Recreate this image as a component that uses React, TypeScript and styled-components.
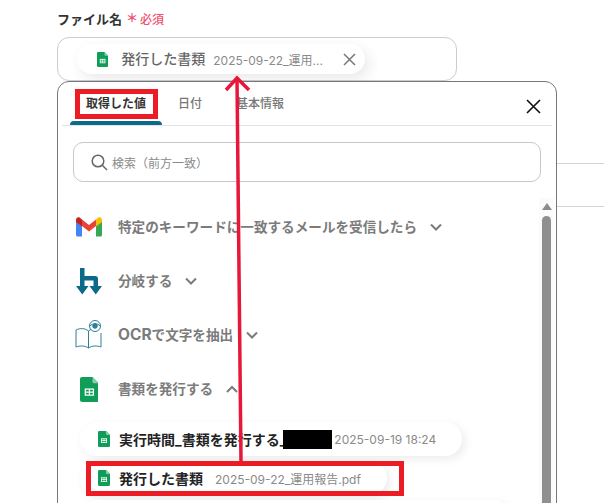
import React from "react";
import styled, { createGlobalStyle } from "styled-components";

const Global = createGlobalStyle`
  html, body { margin: 0; padding: 0; background: #fff; overflow: hidden; }
  body {
    width: 604px;
    height: 503px;
    font-family: Inter, "Noto Sans CJK JP", sans-serif;
  }
`;

const Page = styled.div`
  position: relative;
  width: 604px;
  height: 503px;
  overflow: hidden;
  padding: 8px 0 0 57px;
  box-sizing: border-box;
`;

const LabelRow = styled.div`
  display: flex;
  align-items: center;
  height: 20px;
  margin-bottom: 9px;
`;

const Label = styled.span`
  font-size: 13px;
  font-weight: 700;
  color: #333;
`;

const Star = styled.span`
  font-size: 12px;
  line-height: 20px;
  font-weight: 700;
  color: #f0506e;
  margin: 2px 2px 0 4px;
`;

const Required = styled.span`
  font-size: 12px;
  font-weight: 500;
  color: #f0506e;
`;

const FileBox = styled.div`
  width: 400px;
  height: 44px;
  box-sizing: border-box;
  border: 1px solid #c9ccd4;
  border-radius: 12px;
  display: flex;
  align-items: center;
  padding-left: 19px;
`;

const Pill = styled.div<{ $width: number }>`
  display: flex;
  align-items: center;
  width: ${(p) => p.$width}px;
  height: 30px;
  box-sizing: border-box;
  flex-shrink: 0;
  border-radius: 15px;
  background: #fff;
  box-shadow: 4px 5px 14px rgba(0, 0, 0, 0.09);
`;

const TopPill = styled(Pill)`
  padding-left: 20px;
`;

const PillName = styled.span<{ $dark?: boolean; $left: number }>`
  font-size: 14px;
  font-weight: ${(p) => (p.$dark ? 700 : 500)};
  color: ${(p) => (p.$dark ? "#222" : "#666")};
  margin-left: ${(p) => p.$left}px;
  padding-bottom: ${(p) => (p.$dark ? 0 : 2)}px;
  white-space: nowrap;
  display: flex;
  align-items: center;
`;

const PillValue = styled.span<{ $left: number }>`
  font-size: 12px;
  color: #8a8a8a;
  margin-left: ${(p) => p.$left}px;
  white-space: nowrap;
`;

const PillClose = styled.svg`
  margin-left: 20px;
  flex-shrink: 0;
`;

const Panel = styled.div`
  width: 500px;
  height: 450px;
  box-sizing: border-box;
  border: 1px solid #777;
  border-radius: 12px 12px 0 0;
  background: #fff;
  position: relative;
`;

const Tabs = styled.div`
  display: flex;
  align-items: flex-start;
  height: 43px;
  margin: 0 4px;
  padding-left: 8px;
  border-bottom: 1px solid #e3e3e3;
`;

const Tab = styled.div<{ $active?: boolean; $width: number }>`
  position: relative;
  width: ${(p) => p.$width}px;
  height: 43px;
  line-height: 44px;
  text-align: center;
  font-size: 12px;
  font-weight: ${(p) => (p.$active ? 700 : 500)};
  color: ${(p) => (p.$active ? "#333" : "#777")};
  flex-shrink: 0;

  &::after {
    content: "";
    display: ${(p) => (p.$active ? "block" : "none")};
    position: absolute;
    left: 0;
    right: 0;
    bottom: 0;
    height: 4px;
    background: #0b6a87;
    border-radius: 4px 4px 0 0;
  }
`;

const TabClose = styled.svg`
  margin-left: auto;
  margin-top: 17px;
  margin-right: 11px;
`;

const Search = styled.div`
  margin: 16px 0 0 15px;
  width: 468px;
  height: 40px;
  box-sizing: border-box;
  border: 1px solid #c8c8c8;
  border-radius: 10px;
  display: flex;
  align-items: center;
  padding-left: 17px;
  gap: 4px;
`;

const SearchText = styled.span`
  font-size: 12px;
  color: #8a8a8a;
`;

const List = styled.div`
  display: flex;
  flex-direction: column;
  margin: 18px 0 0 17px;
`;

const Step = styled.div`
  display: flex;
  align-items: center;
  height: 54px;
`;

const StepIcon = styled.div`
  width: 28px;
  height: 30px;
  display: flex;
  align-items: center;
  justify-content: center;
  margin-right: 15px;
  flex-shrink: 0;
`;

const StepTitle = styled.span`
  font-size: 13.6px;
  font-weight: 700;
  color: #7b7b7b;
  white-space: nowrap;
  padding-bottom: 2px;
`;

const Latin = styled.span`
  font-size: 15.5px;
`;

const Chevron = styled.svg`
  margin-left: 13px;
`;

const Values = styled.div`
  display: flex;
  flex-direction: column;
  gap: 5px;
  margin: 6px 0 0 5px;
`;

const ValuePill = styled(Pill)`
  height: 34px;
  border-radius: 17px;
  padding-left: 18px;
  box-shadow: 3px 3px 10px rgba(0, 0, 0, 0.08);
`;

const Redacted = styled.span`
  display: inline-block;
  width: 49px;
  height: 19px;
  margin-left: -3px;
  background: #000;
`;

const Scrollbar = styled.div`
  position: absolute;
  right: 2px;
  top: 116px;
  width: 15px;
  height: 332px;
  background: #fbfbfb;
  display: flex;
  flex-direction: column;
  align-items: center;
  padding-top: 5px;
  box-sizing: border-box;
`;

const ScrollArrow = styled.div`
  width: 0;
  height: 0;
  border-left: 5px solid transparent;
  border-right: 5px solid transparent;
  border-bottom: 7px solid #8c8c8c;
`;

const ScrollThumb = styled.div`
  width: 9px;
  flex: 1;
  margin-top: 6px;
  background: #8f8f8f;
  border-radius: 5px 5px 0 0;
`;

const SideLine = styled.div<{ $top: number }>`
  position: absolute;
  left: 557px;
  right: 0;
  top: ${(p) => p.$top}px;
  height: 1px;
  background: #d4d4d4;
`;

const Callout = styled.div<{ $x: number; $y: number; $w: number; $h: number }>`
  position: absolute;
  left: ${(p) => p.$x}px;
  top: ${(p) => p.$y}px;
  width: ${(p) => p.$w}px;
  height: ${(p) => p.$h}px;
  box-sizing: border-box;
  border: 5px solid #ed1c24;
`;

const ArrowLayer = styled.svg`
  position: absolute;
  left: 0;
  top: 0;
  pointer-events: none;
`;

const SheetIcon = ({ size = 15 }: { size?: number }) => (
  <svg width={size * 0.75} height={size} viewBox="0 0 18 24">
    <path d="M2 0h10l6 6v16a2 2 0 0 1-2 2H2a2 2 0 0 1-2-2V2a2 2 0 0 1 2-2z" fill="#0f9d58" />
    <path d="M12 0l6 6h-4.500A1.500 1.500 0 0 1 12 4.500z" fill="#87ceac" />
    <path d="M4.500 11h9v7h-9z" fill="#fff" />
    <path d="M5.700 12.200h2.800v1.700H5.700zM9.500 12.200h2.800v1.700H9.500zM5.700 15h2.800v1.800H5.700zM9.500 15h2.800v1.800H9.500z" fill="#0f9d58" />
  </svg>
);

const GmailIcon = () => (
  <svg width="26" height="20" viewBox="0 0 26 20">
    <path d="M0 4.500V18a1.600 1.600 0 0 0 1.600 1.600H6V9z" fill="#4285f4" />
    <path d="M20 19.600h4.400A1.600 1.600 0 0 0 26 18V4.500L20 9z" fill="#34a853" />
    <path d="M6 9V2.400L13 8l7-5.600V9l-7 5.500z" fill="#ea4335" />
    <path d="M0 3v2l6 4.500V2.400L3.600.6C2-.6 0 .6 0 3z" fill="#c5221f" />
    <path d="M20 2.400V9.500l6-4.500V3c0-2.400-2-3.600-3.600-2.400z" fill="#fbbc04" />
  </svg>
);

const BranchIcon = () => (
  <svg width="26" height="27" viewBox="0 0 26 27">
    <path d="M4 0h4.500v8H19a3 3 0 0 1 3 3v7h-4.500v-5.500H8.500V18H4z" fill="#0b6a87" />
    <path d="M0 18h12.500l-6.250 8.500zM13.500 18H26l-6.250 8.500z" fill="#0b6a87" />
  </svg>
);

const OcrIcon = () => (
  <svg width="28" height="30" viewBox="0 0 28 30" fill="none" stroke="#2f7f96" strokeWidth="1">
    <path d="M1 10c4-2 9-2 12.500 1v17C10 25.500 5 25.500 1 27z" />
    <path d="M13.500 11c1-.8 2-1.400 3-1.800M26 13v14c-4-1.500-9-1.500-12.500 1" />
    <circle cx="20" cy="6" r="5.500" fill="#fff" />
    <circle cx="20" cy="6" r="2.300" fill="#2f7f96" />
    <path d="M15 6c2-3 8-3 10 0" />
  </svg>
);

const ChevronIcon = ({ up }: { up?: boolean }) => (
  <Chevron width="12" height="8" viewBox="0 0 12 8" fill="none" stroke="#7b7b7b" strokeWidth="2">
    <path d={up ? "M1 7l5-5 5 5" : "M1 1.500l5 5 5-5"} />
  </Chevron>
);

export default function App() {
  return (
    <>
      <Global />
      <Page>
        <LabelRow>
          <Label>ファイル名</Label>
          <Star>＊</Star>
          <Required>必須</Required>
        </LabelRow>
        <FileBox>
          <TopPill $width={288}>
            <SheetIcon />
            <PillName $left={13}>発行した書類</PillName>
            <PillValue $left={8}>2025-09-22_運用...</PillValue>
            <PillClose width="13" height="13" viewBox="0 0 13 13" stroke="#777" strokeWidth="1.500">
              <path d="M1 1l11 11M12 1L1 12" />
            </PillClose>
          </TopPill>
        </FileBox>
        <Panel>
          <Tabs>
            <Tab $active $width={92}>取得した値</Tab>
            <Tab $width={56}>日付</Tab>
            <Tab $width={84}>基本情報</Tab>
            <TabClose width="15" height="15" viewBox="0 0 15 15" stroke="#111" strokeWidth="1.600">
              <path d="M1 1l13 13M14 1L1 14" />
            </TabClose>
          </Tabs>
          <Search>
            <svg width="17" height="17" viewBox="0 0 17 17" fill="none" stroke="#666" strokeWidth="1.500">
              <circle cx="7" cy="7" r="5.800" />
              <path d="M11.300 11.300L16 16" />
            </svg>
            <SearchText>検索（前方一致）</SearchText>
          </Search>
          <List>
            <Step>
              <StepIcon><GmailIcon /></StepIcon>
              <StepTitle>特定のキーワードに一致するメールを受信したら</StepTitle>
              <ChevronIcon />
            </Step>
            <Step>
              <StepIcon><BranchIcon /></StepIcon>
              <StepTitle>分岐する</StepTitle>
              <ChevronIcon />
            </Step>
            <Step>
              <StepIcon><OcrIcon /></StepIcon>
              <StepTitle><Latin>OCR</Latin>で文字を抽出</StepTitle>
              <ChevronIcon />
            </Step>
            <Step>
              <StepIcon><SheetIcon size={25} /></StepIcon>
              <StepTitle>書類を発行する</StepTitle>
              <ChevronIcon up />
            </Step>
            <Values>
              <ValuePill $width={382}>
                <SheetIcon size={16} />
                <PillName $dark $left={9}>実行時間_書類を発行する_<Redacted /></PillName>
                <PillValue $left={2}>2025-09-19 18:24</PillValue>
              </ValuePill>
              <ValuePill $width={307}>
                <SheetIcon size={16} />
                <PillName $dark $left={9}>発行した書類</PillName>
                <PillValue $left={12}>2025-09-22_運用報告.pdf</PillValue>
              </ValuePill>
              <ValuePill $width={430} />
            </Values>
          </List>
          <Scrollbar>
            <ScrollArrow />
            <ScrollThumb />
          </Scrollbar>
        </Panel>
        <SideLine $top={163} />
        <SideLine $top={206} />
        <Callout $x={75} $y={89} $w={83} $h={30} />
        <Callout $x={86} $y={461} $w={318} $h={35} />
        <ArrowLayer width="604" height="503" viewBox="0 0 604 503" fill="none" stroke="#e8173a" strokeWidth="3.500">
          <path d="M241 461L237 79" />
          <path d="M226 90l11-12 12 12" />
        </ArrowLayer>
      </Page>
    </>
  );
}
